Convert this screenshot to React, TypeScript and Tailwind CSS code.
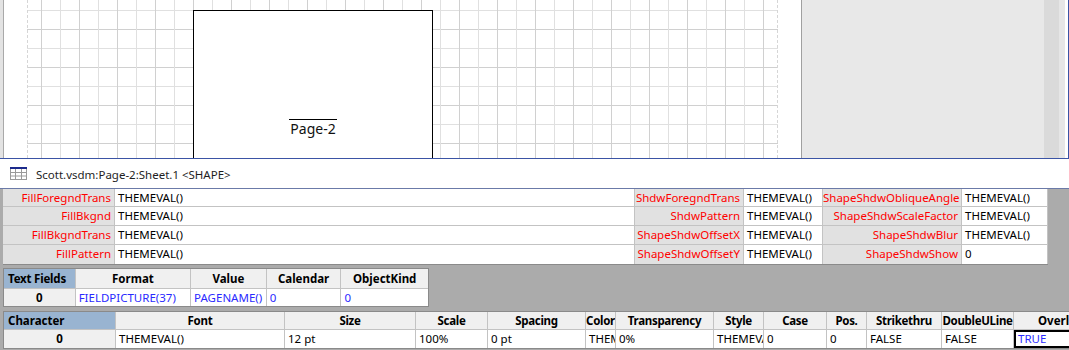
const topRows = [
  ["FillForegndTrans", "THEMEVAL()", "ShdwForegndTrans", "THEMEVAL()", "ShapeShdwObliqueAngle", "THEMEVAL()"],
  ["FillBkgnd", "THEMEVAL()", "ShdwPattern", "THEMEVAL()", "ShapeShdwScaleFactor", "THEMEVAL()"],
  ["FillBkgndTrans", "THEMEVAL()", "ShapeShdwOffsetX", "THEMEVAL()", "ShapeShdwBlur", "THEMEVAL()"],
  ["FillPattern", "THEMEVAL()", "ShapeShdwOffsetY", "THEMEVAL()", "ShapeShdwShow", "0"],
];

const topWidths = ["w-[112px]", "w-[520px]", "w-[109px]", "w-[79px]", "w-[139px]", "w-[86px]"];

const fieldCols = [
  { h: "Format", v: "FIELDPICTURE(37)", w: "w-[116px]" },
  { h: "Value", v: "PAGENAME()", w: "w-[76px]" },
  { h: "Calendar", v: "0", w: "w-[75px]" },
  { h: "ObjectKind", v: "0", w: "w-[87px]" },
];

const charCols = [
  { h: "Font", v: "THEMEVAL()", w: "w-[169px]" },
  { h: "Size", v: "12 pt", w: "w-[131px]" },
  { h: "Scale", v: "100%", w: "w-[72px]" },
  { h: "Spacing", v: "0 pt", w: "w-[98px]" },
  { h: "Color", v: "THEMEVAL()", w: "w-[30px]" },
  { h: "Transparency", v: "0%", w: "w-[98px]" },
  { h: "Style", v: "THEMEVAL()", w: "w-[50px]" },
  { h: "Case", v: "0", w: "w-[63px]" },
  { h: "Pos.", v: "0", w: "w-[40px]" },
  { h: "Strikethru", v: "FALSE", w: "w-[75px]" },
  { h: "DoubleULine", v: "FALSE", w: "w-[72px]" },
];

function SheetIcon() {
  return (
    <svg width="17" height="13" viewBox="0 0 17 13" className="shrink-0">
      <rect x="0.5" y="0.5" width="16" height="12" fill="#fff" stroke="#9a9a9a" />
      <rect x="0" y="0" width="17" height="2" fill="#1c2a8c" />
      <line x1="5.5" y1="2" x2="5.5" y2="13" stroke="#9a9a9a" />
      <line x1="11.5" y1="2" x2="11.5" y2="13" stroke="#9a9a9a" />
      <line x1="0" y1="5.5" x2="17" y2="5.5" stroke="#9a9a9a" />
      <line x1="0" y1="9" x2="17" y2="9" stroke="#9a9a9a" />
    </svg>
  );
}

export default function App() {
  return (
    <div className="w-[1069px] h-[350px] overflow-hidden bg-white font-['Noto_Sans',sans-serif] text-[11.5px] text-black">
      {/* drawing window */}
      <div className="relative flex h-[159px] overflow-hidden border-b border-r border-[#3b54a5]">
        <div className="w-[4px] bg-[#e3e3e3] border-r border-[#a9a9a9]" />
        <div className="flex w-[797px] bg-white pl-[23px]">
          <div className="w-[751px] h-full border-x border-dashed border-[#d6d6d6] bg-[image:linear-gradient(to_right,#d0d0d0_0_1px,transparent_1px_19px,#e0e0e0_19px_20px,transparent_20px),linear-gradient(to_bottom,#d0d0d0_0_1px,transparent_1px_19px,#e0e0e0_19px_20px,transparent_20px)] bg-[size:38px_38px] bg-[position:13px_29px]" />
        </div>
        <div className="w-px bg-[#a0a0a0]" />
        <div className="w-[242px] bg-[#e8e8e8]" />
        <div className="w-[15px] bg-[#dadada]" />
        <div className="w-[6px] bg-[#e6e6e6]" />
        <div className="flex-1 bg-white" />
        <div className="absolute left-[193px] top-[10px] w-[240px] h-[170px] border border-black bg-white">
          <div className="absolute left-0 right-0 top-[108px] flex justify-center">
            <span className="border-t border-black pt-[2px] px-px text-[14px] leading-[14px] text-[#111]">Page-2</span>
          </div>
        </div>
      </div>

      {/* title bar */}
      <div className="flex items-center h-[29px] pl-[10px] gap-[9px] bg-white">
        <SheetIcon />
        <span className="text-[11.5px] text-[#1e1e1e] pt-[2px]">Scott.vsdm:Page-2:Sheet.1 &lt;SHAPE&gt;</span>
      </div>

      {/* shapesheet */}
      <div className="h-[162px] bg-[#ababab] border-t border-[#6b7aa8] pl-[3px]">
        <div className="w-[1045px] border-b border-[#8a8a8a]">
          {topRows.map((r, i) => (
            <div key={i} className={`flex ${i === 0 ? "h-[18px]" : "h-[19px]"} ${i < 3 ? "border-b border-[#c3c3c3]" : ""}`}>
              {r.map((c, j) => (
                <div
                  key={j}
                  className={`${topWidths[j]} h-full leading-[17px] whitespace-nowrap overflow-hidden border-r border-[#c3c3c3] ${
                    j % 2 === 0 ? "bg-[#e1e1e1] text-right pr-[3px] text-[#ff0000]" : "bg-white pl-[3px]"
                  }`}
                >
                  {c}
                </div>
              ))}
            </div>
          ))}
        </div>

        {/* text fields */}
        <div className="mt-[3px] w-[426px] border border-[#8a8a8a]">
          <div className="flex h-[20px] border-b border-[#c3c3c3] font-bold">
            <div className="w-[72px] bg-[#99b4d1] border-r border-[#c3c3c3] pl-[4px] leading-[19px] tracking-[-0.2px]">Text Fields</div>
            {fieldCols.map((c) => (
              <div key={c.h} className={`${c.w} bg-[#f0f0f0] border-r border-[#c3c3c3] last:border-r-0 text-center leading-[19px]`}>
                {c.h}
              </div>
            ))}
          </div>
          <div className="flex h-[17px]">
            <div className="w-[72px] bg-[#f0f0f0] border-r border-[#c3c3c3] text-center font-bold leading-[17px]">0</div>
            {fieldCols.map((c) => (
              <div key={c.h} className={`${c.w} bg-white border-r border-[#c3c3c3] last:border-r-0 pl-[3px] leading-[17px] text-[#2a2aff] whitespace-nowrap overflow-hidden`}>
                {c.v}
              </div>
            ))}
          </div>
        </div>

        {/* character */}
        <div className="mt-[4px] flex w-[1070px] border border-r-0 border-[#8a8a8a]">
          <div className="w-[112px] shrink-0 border-r border-[#c3c3c3]">
            <div className="h-[18px] bg-[#99b4d1] border-b border-[#c3c3c3] pl-[4px] font-bold leading-[17px]">Character</div>
            <div className="h-[18px] bg-[#f0f0f0] text-center font-bold leading-[18px]">0</div>
          </div>
          {charCols.map((c) => (
            <div key={c.h} className={`${c.w} shrink-0 border-r border-[#c3c3c3]`}>
              <div className="h-[18px] bg-[#f0f0f0] border-b border-[#c3c3c3] flex justify-center font-bold leading-[17px] tracking-[-0.3px] whitespace-nowrap overflow-hidden">
                {c.h}
              </div>
              <div className="h-[18px] bg-white pl-[3px] leading-[18px] whitespace-nowrap overflow-hidden">{c.v}</div>
            </div>
          ))}
          <div className="flex-1 shrink-0 min-w-[100px]">
            <div className="h-[18px] bg-[#f0f0f0] border-b border-[#c3c3c3] font-bold leading-[17px] pl-[24px] whitespace-nowrap">Overline</div>
            <div className="h-[18px] bg-white border-2 border-black pl-[2px] leading-[14px] text-[#2a2aff]">TRUE</div>
          </div>
        </div>
      </div>
    </div>
  );
}
